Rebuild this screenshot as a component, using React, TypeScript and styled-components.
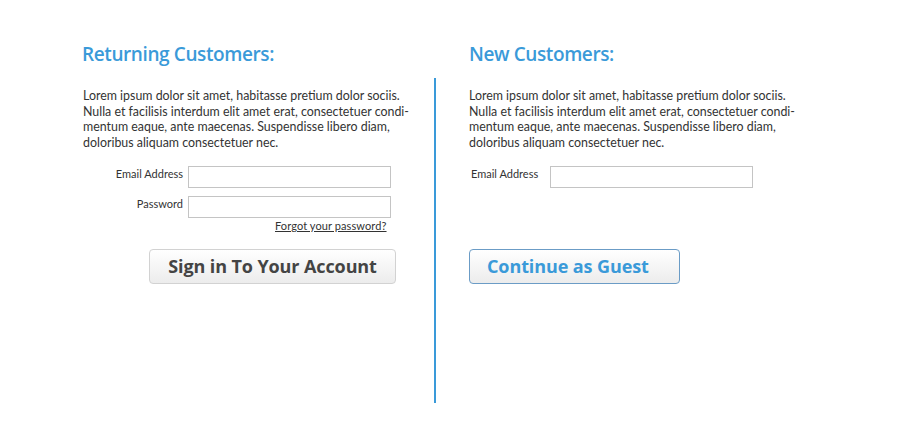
import styled, { createGlobalStyle } from "styled-components";

const GlobalStyle = createGlobalStyle`
  html, body {
    margin: 0;
    padding: 0;
    background: #ffffff;
  }
`;

const Page = styled.div`
  width: 904px;
  height: 429px;
  box-sizing: border-box;
  padding: 41px 0 0 82px;
  display: grid;
  grid-template-columns: 352px 420px;
  font-family: "Lato", "Liberation Sans", sans-serif;
  color: #333;
`;

const Column = styled.section`
  display: flex;
  flex-direction: column;
`;

const Heading = styled.h2<{ $indent?: number }>`
  margin: 0 0 0 ${(p) => p.$indent ?? 0}px;
  height: 37px;
  font-family: "Open Sans", sans-serif;
  font-weight: 600;
  font-size: 19px;
  letter-spacing: -0.4px;
  line-height: 26px;
  color: #3a9ad9;
`;

const Body = styled.div<{ $divider?: boolean }>`
  height: 325px;
  box-sizing: border-box;
  padding: 10px 0 0 ${(p) => (p.$divider ? 33 : 1)}px;
  border-left: ${(p) => (p.$divider ? "2px solid #3a9ad9" : "none")};
  display: flex;
  flex-direction: column;
`;

const Text = styled.p`
  margin: 0 0 15px;
  font-size: 12.4px;
  line-height: 15.7px;
  white-space: nowrap;
  color: #333;
`;

const Form = styled.div`
  display: flex;
  flex-direction: column;
  gap: 8px;
  height: 83px;
`;

const Row = styled.label`
  display: flex;
  align-items: flex-start;
`;

const Label = styled.span<{
  $width: number;
  $align: "left" | "right";
  $gap: number;
  $lead?: number;
}>`
  width: ${(p) => p.$width}px;
  margin: 0 ${(p) => p.$gap}px 0 ${(p) => p.$lead ?? 0}px;
  text-align: ${(p) => p.$align};
  font-size: 11px;
  line-height: 15px;
  color: #333;
`;

const Input = styled.input`
  width: 203px;
  height: 22px;
  box-sizing: border-box;
  border: 1px solid #c4c4c4;
  background: #fff;
  margin: 0;
  padding: 0 4px;
`;

const Forgot = styled.a`
  align-self: flex-start;
  margin: -7px 0 0 192px;
  font-size: 11px;
  line-height: 14px;
  color: #333;
  text-decoration: underline;
  letter-spacing: 0.1px;
`;

const Button = styled.button<{ $guest?: boolean }>`
  margin: 0 0 0 ${(p) => (p.$guest ? 0 : 66)}px;
  width: ${(p) => (p.$guest ? 211 : 247)}px;
  height: 35px;
  box-sizing: border-box;
  padding: 0 0 0 ${(p) => (p.$guest ? 17 : 0)}px;
  text-align: ${(p) => (p.$guest ? "left" : "center")};
  border: 1px solid ${(p) => (p.$guest ? "#6b9cc6" : "#d2d2d2")};
  border-radius: 4px;
  background: linear-gradient(#ffffff, #ececec);
  font-family: "Open Sans", sans-serif;
  font-weight: 700;
  font-size: 18px;
  letter-spacing: -0.1px;
  color: ${(p) => (p.$guest ? "#3a9ad9" : "#444")};
  cursor: pointer;
`;

const lorem = (
  <>
    Lorem ipsum dolor sit amet, habitasse pretium dolor sociis.
    <br />
    Nulla et facilisis interdum elit amet erat, consectetuer condi-
    <br />
    mentum eaque, ante maecenas. Suspendisse libero diam,
    <br />
    doloribus aliquam consectetuer nec.
  </>
);

export default function App() {
  return (
    <>
      <GlobalStyle />
      <Page>
        <Column>
          <Heading>Returning Customers:</Heading>
          <Body>
            <Text>{lorem}</Text>
            <Form>
              <Row>
                <Label $width={100} $align="right" $gap={5}>
                  Email Address
                </Label>
                <Input type="text" />
              </Row>
              <Row>
                <Label $width={100} $align="right" $gap={5}>
                  Password
                </Label>
                <Input type="password" />
              </Row>
              <Forgot href="#">Forgot your password?</Forgot>
            </Form>
            <Button>Sign in To Your Account</Button>
          </Body>
        </Column>
        <Column>
          <Heading $indent={35}>New Customers:</Heading>
          <Body $divider>
            <Text>{lorem}</Text>
            <Form>
              <Row>
                <Label $width={79} $align="left" $gap={0} $lead={2}>
                  Email Address
                </Label>
                <Input type="text" />
              </Row>
            </Form>
            <Button $guest>Continue as Guest</Button>
          </Body>
        </Column>
      </Page>
    </>
  );
}
